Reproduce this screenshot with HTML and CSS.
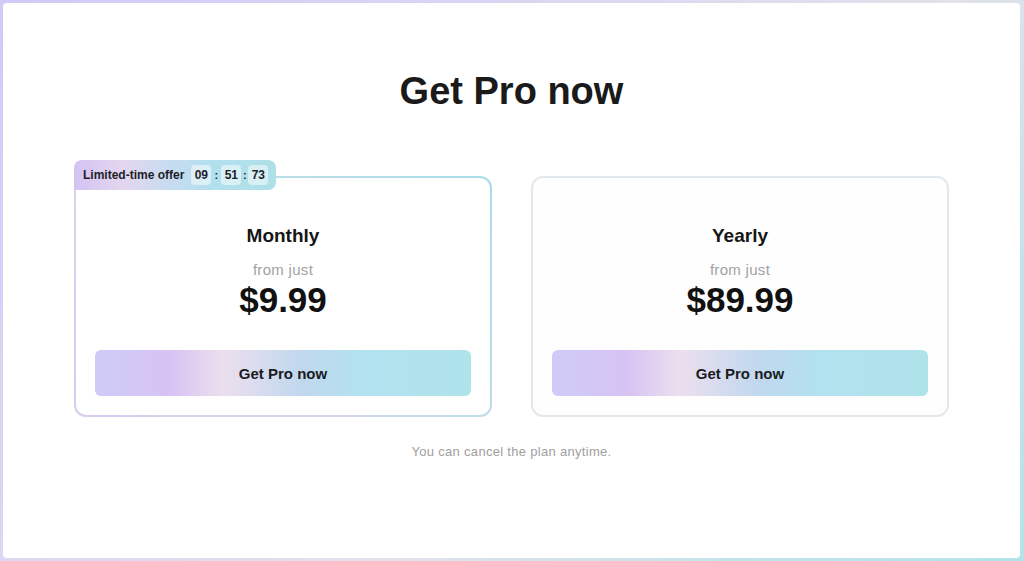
FILE: index.html
```html
<!DOCTYPE html>
<html lang="en">
<head>
<meta charset="utf-8">
<title>Get Pro now</title>
<link rel="stylesheet" href="styles.css">
</head>
<body>
<div class="frame">
  <main class="panel">
    <h1 class="title">Get Pro now</h1>
    <div class="plans">
      <section class="card card-featured">
        <div class="badge">
          <span class="badge-label">Limited-time offer</span>
          <span class="timer">
            <span class="tbox">09</span><span class="colon c1">:</span><span class="tbox">51</span><span class="colon c2">:</span><span class="tbox">73</span>
          </span>
        </div>
        <h2 class="plan-name">Monthly</h2>
        <div class="from">from just</div>
        <div class="price">$9.99</div>
        <button class="cta">Get Pro now</button>
      </section>
      <section class="card card-plain">
        <h2 class="plan-name">Yearly</h2>
        <div class="from">from just</div>
        <div class="price">$89.99</div>
        <button class="cta">Get Pro now</button>
      </section>
    </div>
    <p class="note">You can cancel the plan anytime.</p>
  </main>
</div>
</body>
</html>
```
FILE: styles.css
```css
* { box-sizing: border-box; }
html, body { margin: 0; padding: 0; }
body {
  font-family: "Liberation Sans", Arial, sans-serif;
  color: #151515;
  background: #fff;
}
.frame {
  width: 1024px;
  height: 561px;
  padding: 3px 4px 3px 3px;
  background: linear-gradient(135deg, #d2caf8 0%, #dcd6f2 35%, #e2e2ea 60%, #c6e2ea 80%, #b4e3ea 100%);
}
.panel {
  height: 100%;
  background: #fff;
  border-radius: 4px;
  display: flex;
  flex-direction: column;
  align-items: center;
  padding-top: 65px;
}
.title {
  margin: 0;
  font-size: 38px;
  line-height: 46px;
  font-weight: 700;
  color: #1a1a1a;
}
.plans {
  display: flex;
  gap: 39px;
  margin-top: 62px;
}
.card {
  position: relative;
  width: 418px;
  height: 241px;
  border: 2px solid transparent;
  border-radius: 12px;
  padding: 46px 19px 17px;
  display: flex;
  flex-direction: column;
  align-items: center;
}
.card-featured {
  background:
    linear-gradient(#fff, #fff) padding-box,
    linear-gradient(45deg, #dacbf0 0%, #d9d3ea 35%, #bfdde9 60%, #a9dce8 100%) border-box;
}
.card-plain {
  border-color: #e3e8ec;
  background: #fefeff;
}
.badge {
  position: absolute;
  top: -18px;
  left: -2px;
  height: 30px;
  display: flex;
  align-items: center;
  padding: 0 8px 0 9px;
  border-radius: 8px 8px 8px 0;
  background: linear-gradient(90deg, #d2c3f4 0%, #e4d6ef 24%, #cbdbf0 44%, #b3e0ee 68%, #aee0e8 100%);
}
.badge-label {
  font-size: 12px;
  font-weight: 700;
  color: #1e1e28;
  margin-right: 7px;
}
.timer {
  display: flex;
  align-items: center;
}
.tbox {
  width: 20px;
  height: 20px;
  border-radius: 4px;
  background: rgba(255, 255, 255, 0.5);
  display: flex;
  align-items: center;
  justify-content: center;
  font-size: 12px;
  font-weight: 700;
  color: #1e1e28;
}
.colon {
  text-align: center;
  font-size: 11px;
  font-weight: 700;
  color: #1e1e28;
}
.c1 { width: 10px; }
.c2 { width: 7px; }
.plan-name {
  margin: 0;
  font-size: 19px;
  line-height: 24px;
  font-weight: 700;
  color: #161616;
}
.from {
  margin-top: 12px;
  font-size: 15px;
  line-height: 20px;
  letter-spacing: 0.3px;
  color: #a2a2a2;
}
.price {
  font-size: 35px;
  line-height: 40px;
  font-weight: 700;
  color: #111;
}
.cta {
  margin-top: 30px;
  width: 100%;
  height: 46px;
  flex: none;
  border: 0;
  border-radius: 6px;
  font-family: inherit;
  font-size: 15px;
  font-weight: 700;
  color: #1b1b22;
  cursor: pointer;
  background: linear-gradient(90deg, #cfcbf8 0%, #d6c3f3 20%, #ecdfee 34%, #dadcef 43%, #c0d8ee 55%, #b2e2ef 72%, #afe3ea 100%);
}
.note {
  margin: 26px 0 0;
  font-size: 13px;
  line-height: 18px;
  letter-spacing: 0.3px;
  color: #a0a0a0;
}
```
